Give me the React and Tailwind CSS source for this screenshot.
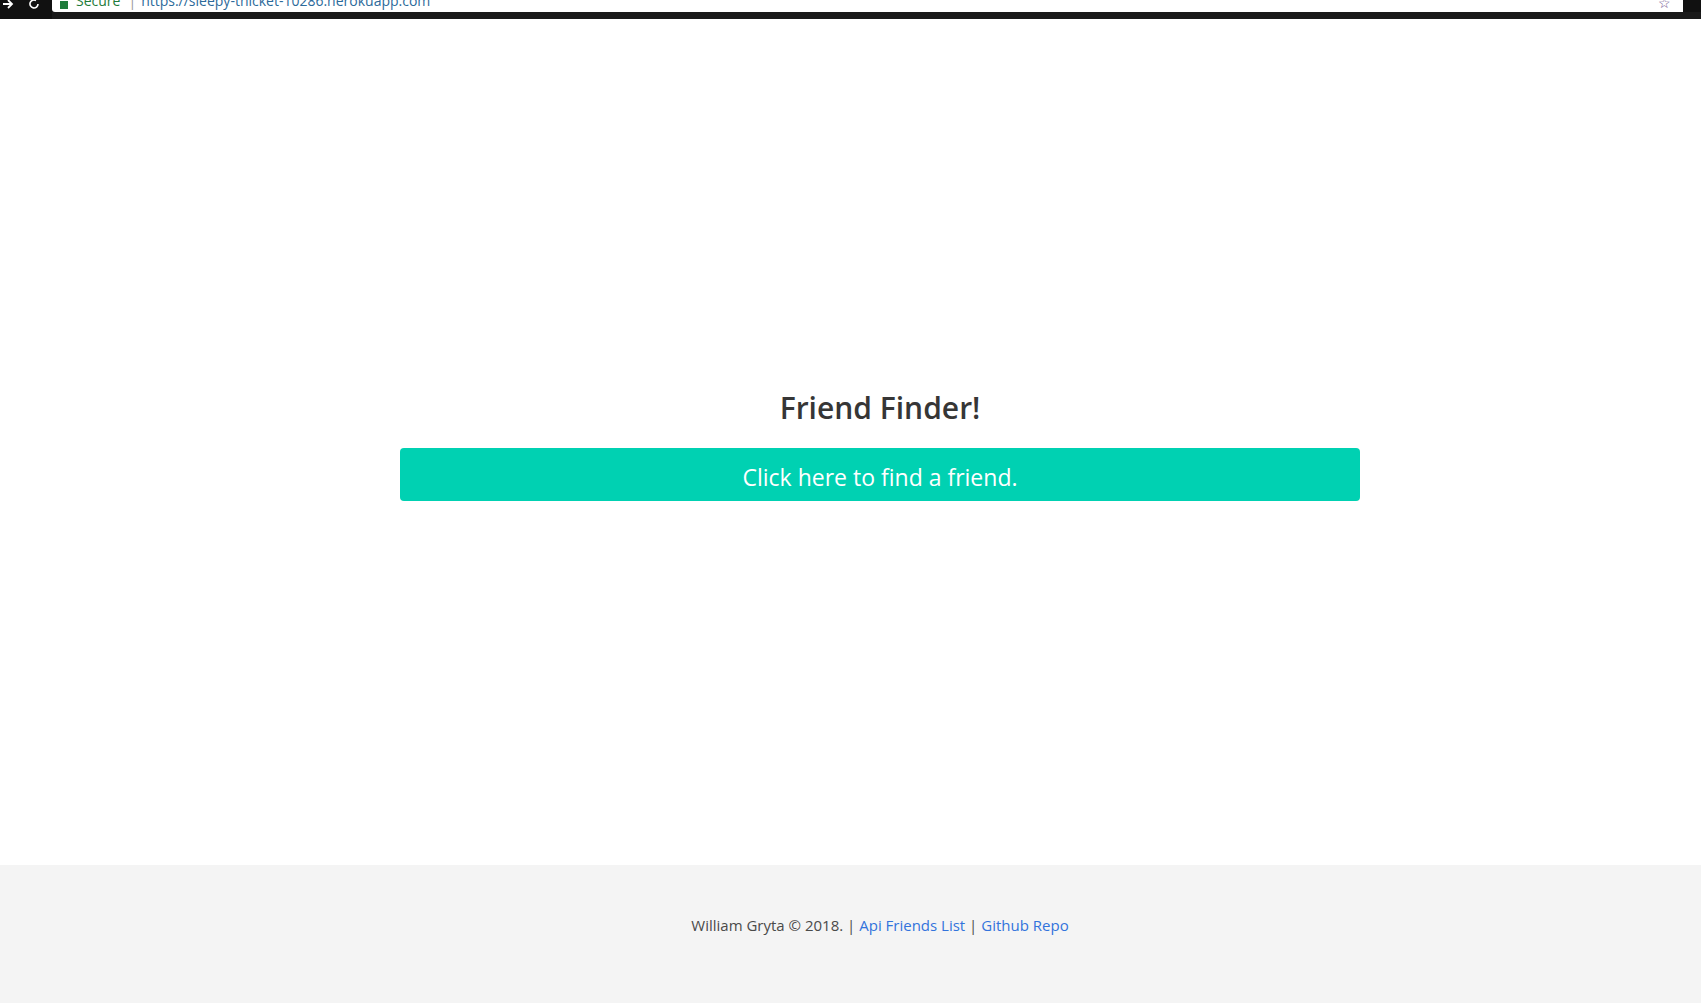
import React from 'react';

const App = () => {
  return (
    <div className="h-screen overflow-hidden bg-white font-['Open_Sans',sans-serif] text-[#363636]">
      {/* Browser chrome strip */}
      <div className="h-[19px] bg-[#111] flex">
        <div className="w-[52px] h-[12px] flex items-end gap-[14px] pl-[2px] overflow-hidden text-white">
          <svg width="12" height="12" viewBox="0 0 12 12" className="mb-[2px]">
            <path d="M1 6 H10 M6 2 L10 6 L6 10" stroke="white" strokeWidth="1.8" fill="none" />
          </svg>
          <svg width="12" height="12" viewBox="0 0 12 12" className="mb-[2px]">
            <path d="M10 6 A4 4 0 1 1 8 2.5" stroke="white" strokeWidth="1.6" fill="none" />
          </svg>
        </div>
        <div className="flex-1 flex flex-col">
          <div className="h-[12px] bg-white rounded-bl-[3px] overflow-hidden flex items-end pl-[8px] gap-[8px] text-[14px] leading-none mr-[18px]">
            <span className="w-[8px] h-[8px] bg-[#1e7b3a] mb-[3px]"></span>
            <span className="text-[#1e7b3a] mb-[4px]">Secure</span>
            <span className="text-[#999] mb-[4px]">|</span>
            <span className="text-[#2c6a9a] mb-[4px] ml-[-3px]">https://sleepy-thicket-10286.herokuapp.com</span>
            <span className="ml-auto mr-[12px] text-[#6b4c8a] mb-[2px] text-[14px]">☆</span>
          </div>
          <div className="flex-1 bg-[#1a1a1a]"></div>
        </div>
      </div>

      <div className="w-[1760px]">
        {/* Main section */}
        <main className="h-[846px] flex flex-col items-center justify-center">
          <h1 className="text-[30px] font-semibold text-[#363636] leading-[1.125] mb-[24px] mt-[8px]">
            Friend Finder!
          </h1>
          <button className="w-[960px] h-[53px] rounded-[4px] bg-[#00d1b2] text-white text-[23px] pt-[4px] flex items-center justify-center">
            Click here to find a friend.
          </button>
        </main>

        {/* Footer */}
        <footer className="bg-[#f4f4f4] pt-[48px] pb-[96px] px-6 text-center text-[15px] leading-[24px] text-[#4a4a4a]">
          <p>
            William Gryta © 2018. |{' '}
            <a href="#" className="text-[#3273dc]">Api Friends List</a>{' '}
            |{' '}
            <a href="#" className="text-[#3273dc]">Github Repo</a>
          </p>
        </footer>
      </div>
    </div>
  );
};

export default App;
